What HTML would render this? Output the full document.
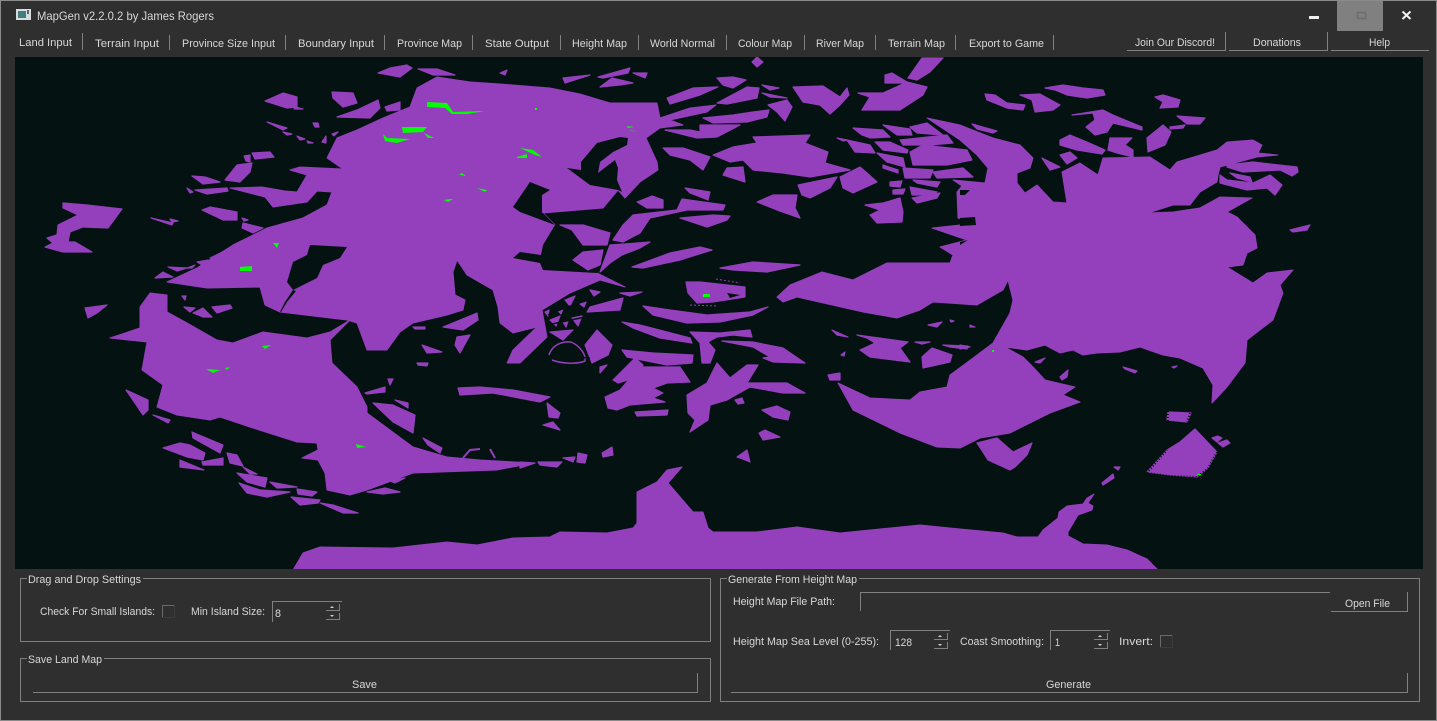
<!DOCTYPE html>
<html><head><meta charset="utf-8"><title>MapGen</title>
<style>
html,body{margin:0;padding:0;background:#2f2f2f;width:1437px;height:721px;overflow:hidden}
svg{display:block}
text{font-family:"Liberation Sans",sans-serif;font-size:11px;fill:#d8d8d8}
</style></head><body>
<svg width="1437" height="721" viewBox="0 0 1437 721" xmlns="http://www.w3.org/2000/svg">
<defs><clipPath id="m"><rect x="15" y="57" width="1408" height="512"/></clipPath></defs>
<rect width="1437" height="721" fill="#2f2f2f"/>
<rect x="0.5" y="0.5" width="1436" height="720" fill="none" stroke="#8a8a8a"/>
<!-- title bar -->
<rect x="16" y="9" width="15" height="11" fill="#d8dcdc"/><rect x="18" y="11" width="8" height="7" fill="#3f7f80"/><rect x="27" y="10" width="2" height="4" fill="#5a6a6a"/>
<text x="37" y="20" textLength="177" lengthAdjust="spacingAndGlyphs" style="font-size:12px">MapGen v2.2.0.2 by James Rogers</text>
<rect x="1309" y="16" width="10" height="3" fill="#eee"/>
<rect x="1337" y="1" width="46" height="30" fill="#808080"/>
<rect x="1357.5" y="12.5" width="8" height="6" fill="none" stroke="#6c6c6c" stroke-width="1.5"/>
<path d="M1402.5 11.5L1410.5 19M1410.5 11.5L1402.5 19" stroke="#f2f2f2" stroke-width="2" fill="none"/>
<!-- menu -->
<g>
<text x="19" y="46" textLength="53" lengthAdjust="spacingAndGlyphs">Land Input</text>
<text x="95" y="47" textLength="64" lengthAdjust="spacingAndGlyphs">Terrain Input</text>
<text x="182" y="47" textLength="93" lengthAdjust="spacingAndGlyphs">Province Size Input</text>
<text x="298" y="47" textLength="76" lengthAdjust="spacingAndGlyphs">Boundary Input</text>
<text x="397" y="47" textLength="65" lengthAdjust="spacingAndGlyphs">Province Map</text>
<text x="485" y="47" textLength="64" lengthAdjust="spacingAndGlyphs">State Output</text>
<text x="572" y="47" textLength="55" lengthAdjust="spacingAndGlyphs">Height Map</text>
<text x="650" y="47" textLength="65" lengthAdjust="spacingAndGlyphs">World Normal</text>
<text x="738" y="47" textLength="54" lengthAdjust="spacingAndGlyphs">Colour Map</text>
<text x="816" y="47" textLength="48" lengthAdjust="spacingAndGlyphs">River Map</text>
<text x="888" y="47" textLength="57" lengthAdjust="spacingAndGlyphs">Terrain Map</text>
<text x="969" y="47" textLength="75" lengthAdjust="spacingAndGlyphs">Export to Game</text>
<text x="1135" y="46" textLength="80" lengthAdjust="spacingAndGlyphs">Join Our Discord!</text>
<text x="1253" y="46" textLength="48" lengthAdjust="spacingAndGlyphs">Donations</text>
<text x="1369" y="46" textLength="21" lengthAdjust="spacingAndGlyphs">Help</text>
</g>
<path d="M82.5 33V50M169.5 35V50M285.5 35V50M384.5 35V50M472.5 35V50M560.5 35V50M638.5 35V50M726.5 35V50M804.5 35V50M875.5 35V50M955.5 35V50M1053.5 35V50M1127 50.5H1225.5V32M1229 50.5H1327.5V32M1331 50.5H1429" fill="none" stroke="#808080"/>
<!-- map -->
<rect x="15" y="57" width="1408" height="512" fill="#041212"/>
<g clip-path="url(#m)">
<g fill="#9440bc" stroke="#9440bc" stroke-width="1" stroke-linejoin="round">
<polygon points="417,88 437,77 470,82 500,84 550,88 580,94 610,103 657,103 660,118 690,108 716,105 707,112 670,120 683,125 660,128 646,138 657,162 658,170 640,182 625,198 618,190 603,208 543,213 555,225 543,245 541,255 540,263 543,270 597,273 625,287 600,280 570,293 542,310 547,337 520,363 507,363 513,350 537,327 513,333 500,323 498,307 493,290 467,275 457,260 453,272 455,295 465,300 463,310 447,315 413,323 400,332 387,350 367,350 357,323 347,320 280,312 265,305 260,287 207,288 167,282 197,268 233,245 267,228 303,218 327,205 332,192 317,191 307,202 273,207 265,197 230,188 262,187 285,191 297,192 307,175 290,170 300,167 343,169 327,158 337,138 357,130 383,118 410,107"/>
<polygon points="110,338 140,328 140,307 150,293 167,295 167,312 187,323 217,340 233,343 263,332 307,338 330,332 350,320 330,340 332,363 357,387 367,407 367,413 413,447 447,457 480,460 533,463 497,470 413,473 367,490 350,495 327,490 325,473 318,460 302,458 318,450 317,443 297,442 253,428 220,417 210,420 177,415 157,407 163,385 142,370 147,342"/>
<polygon points="777,297 790,285 822,272 853,280 887,263 950,263 953,255 940,247 967,240 932,228 960,225 975,222 958,218 957,192 962,186 953,180 985,183 988,168 977,155 960,140 945,130 927,118 960,125 993,138 1020,145 1033,158 1030,168 1017,173 1017,183 1025,193 1037,185 1053,202 1067,203 1062,172 1080,163 1098,175 1103,158 1150,157 1170,170 1177,162 1217,150 1227,142 1253,140 1262,145 1258,153 1278,155 1257,157 1220,167 1218,175 1217,182 1200,192 1190,205 1173,205 1148,213 1173,212 1200,208 1220,197 1252,198 1227,212 1237,217 1255,235 1257,248 1247,253 1243,265 1227,267 1253,283 1267,273 1293,270 1280,285 1283,293 1273,320 1247,340 1245,363 1227,387 1212,403 1213,385 1203,368 1180,358 1163,355 1140,347 1120,352 1097,353 1083,355 1073,350 1060,353 1045,345 1027,350 1005,347 1023,357 1033,367 1045,380 1075,387 1063,395 1080,402 1050,413 1010,433 980,438 960,448 937,447 900,433 853,410 838,383 870,398 910,400 920,392 947,387 950,375 973,358 993,343 1010,313 1013,300 1008,280 1003,290 977,305 933,302 920,310 897,318 863,312 797,297 783,302"/>
<polygon points="293,570 303,553 320,547 393,548 447,542 477,545 513,538 550,537 560,532 607,533 633,528 637,523 637,492 657,482 667,470 682,467 668,483 693,512 703,512 708,528 713,532 757,532 797,527 840,533 920,525 960,529 1003,533 1017,537 1038,537 1043,530 1058,518 1059,512 1067,506 1083,504 1087,498 1094,494 1088,503 1093,506 1092,510 1078,515 1068,532 1068,536 1083,544 1107,545 1127,550 1147,559 1158,570"/>
</g>
<g fill="#041212">
<polygon points="310,245 347,247 340,258 323,265 317,278 293,290 287,282 293,262 307,255"/>
<polygon points="293,290 285,302 280,312 281,312 287,302 296,291"/>
<polygon points="567,168 581,170 581,162 597,143 620,137 628,138 627,145 613,152 600,162 598,173 615,160 618,168 617,180 622,192 618,190 590,185"/>
<polygon points="513,207 530,182 550,190 542,195 542,213 543,213 555,225 520,212"/>
<polygon points="555,225 543,245 541,255 520,252 513,258 540,263 543,270 597,273 610,263 572,262 570,225"/>
<polygon points="960,190 970,190 965,195 960,195"/>
<polygon points="960,218 975,217 976,225 960,226"/>
<polygon points="960,242 968,240 960,245"/>
</g>
<g fill="#9440bc" stroke="#9440bc" stroke-width="1.2" stroke-linejoin="round">
<polygon points="378,73 390,68 407,65 412,68 400,77"/><polygon points="418,69 437,69 455,75 433,75"/>
<polygon points="265,101 283,93 297,97 297,107 287,108"/><polygon points="295,107 303,109 294,109"/>
<polygon points="332,92 353,93 357,103 343,107 333,98"/><polygon points="337,117 357,110 378,100 380,108 370,118"/>
<polygon points="385,107 400,102 400,110 387,111"/><polygon points="313,123 318,123 319,127 315,127"/>
<polygon points="267,122 287,128 283,130"/><polygon points="283,132 292,134 287,135"/><polygon points="297,136 305,139 300,140"/><polygon points="307,141 313,143 308,143"/><polygon points="322,142 326,136 326,143"/><polygon points="332,134 338,132 334,136"/>
<polygon points="252,153 270,152 274,157 255,159"/><polygon points="225,180 237,165 252,163 250,172 240,182"/><polygon points="244,156 250,155 250,162 246,161"/>
<polygon points="192,176 205,177 220,182 203,184"/><polygon points="187,188 193,192 190,193"/><polygon points="195,190 227,188 228,191 207,194"/>
<polygon points="202,210 210,207 237,212 237,220 223,220"/><polygon points="243,223 263,228 253,233 242,228"/><polygon points="242,218 248,220 244,221"/>
<polygon points="63,203 87,205 122,209 108,228 83,227 70,232 68,242 75,242 92,252 63,252 45,247 53,243 47,238 57,235 58,225 78,215 63,208"/>
<polygon points="151,218 173,223 172,225"/><polygon points="170,219 178,221 172,222"/>
<polygon points="155,278 163,272 173,277"/><polygon points="168,267 187,268 177,271"/><polygon points="187,268 195,265 192,268"/><polygon points="197,262 208,260 202,265"/><polygon points="210,258 233,247 223,257"/>
<polygon points="85,308 107,305 97,313 88,318"/><polygon points="184,307 195,308 190,312"/><polygon points="182,296 186,296 185,300"/><polygon points="193,313 203,308 212,317 203,317"/><polygon points="212,307 230,305 232,308 217,313"/>
<polygon points="126,390 148,400 148,410 143,415 135,403"/><polygon points="153,415 170,420 168,423"/>
<polygon points="192,432 223,445 220,453 193,438"/><polygon points="163,448 180,443 190,445 205,453 203,460 187,457"/><polygon points="180,460 204,470 180,467"/><polygon points="202,462 223,458 223,465 203,465"/>
<polygon points="227,453 237,455 243,466 230,463"/><polygon points="243,467 257,474 250,474"/><polygon points="237,473 267,478 265,487 247,482"/><polygon points="270,482 297,487 277,488"/><polygon points="239,483 260,490 290,492 267,497 247,493"/><polygon points="297,489 317,492 312,496 298,494"/><polygon points="291,497 320,500 318,503 300,505"/><polygon points="320,503 333,505 358,513 343,513"/><polygon points="367,492 385,488 400,492 383,494"/><polygon points="390,481 405,478 395,483"/>
<polygon points="365,393 385,387 385,392 367,394"/><polygon points="388,379 393,379 390,385"/><polygon points="373,403 393,405 415,415 413,433 393,422"/><polygon points="395,400 408,403 408,408"/><polygon points="423,438 442,448 440,453 428,445"/>
<polygon points="422,345 442,352 427,353"/><polygon points="417,363 428,363 427,366 418,365"/><polygon points="413,327 425,327 425,329 415,329"/><polygon points="443,327 477,313 478,320 463,330"/><polygon points="457,337 470,335 460,353 455,345"/>
<polygon points="458,388 480,387 513,390 550,397 540,402 493,393 460,395"/>
<polygon points="547,403 560,413 558,418 549,417"/><polygon points="543,425 553,422 560,430"/>
<polygon points="520,462 535,463 520,468"/><polygon points="538,462 562,462 557,467 540,465"/><polygon points="563,458 575,457 573,462"/><polygon points="578,453 587,455 585,463 577,462"/><polygon points="602,453 612,447 613,455 603,457"/>
<polygon points="563,78 590,75 565,83"/><polygon points="598,77 630,68 628,73 603,78"/><polygon points="612,78 633,83 620,85 600,87"/><polygon points="633,73 647,73 645,78"/><polygon points="500,73 507,70 505,75"/>
<polygon points="908,78 922,58 943,58 930,72 917,80"/>
<polygon points="885,75 892,73 907,82 927,87 923,95 900,110 880,110 862,110 870,97 858,93 883,93 905,83 885,83"/>
<polygon points="793,87 823,86 840,97 847,88 849,95 840,105 830,114 820,105 803,102"/>
<polygon points="752,62 757,57 763,62 757,67"/><polygon points="717,78 733,77 746,80 733,88 723,85"/>
<polygon points="667,98 693,88 718,87 700,95 670,104"/><polygon points="717,103 747,87 759,88 757,98 727,104"/>
<polygon points="762,85 779,88 770,90"/><polygon points="762,93 787,98 770,97"/><polygon points="768,105 787,100 792,107 785,121 777,112"/>
<polygon points="703,118 733,115 753,112 769,110 767,117 747,122 713,123"/>
<polygon points="700,125 740,125 717,137 697,138 665,130 690,130 700,132"/>
<polygon points="663,148 683,148 710,157 703,170 690,160 670,155"/>
<polygon points="713,155 733,147 757,143 753,137 810,135 805,143 828,152 825,163 850,170 810,177 783,173 753,170 743,160 730,162"/>
<polygon points="727,168 743,167 745,182 723,175"/><polygon points="798,185 837,177 830,188 810,198 802,195"/><polygon points="840,177 860,167 867,173 877,182 853,193 843,188"/>
<polygon points="757,202 773,195 797,195 795,208 800,218 777,210"/><polygon points="865,205 883,203 900,198 903,212 902,222 877,223 870,215 880,210"/>
<polygon points="685,188 710,192 708,200 690,193"/><polygon points="637,202 652,196 663,200 663,208 647,208"/>
<polygon points="613,240 623,225 633,215 677,210 682,199 703,202 725,205 723,210 687,210 650,218 640,233 623,242"/>
<polygon points="680,218 713,215 730,216 727,220 707,227"/><polygon points="560,225 583,225 610,233 607,245 583,245 572,230"/>
<polygon points="573,260 583,252 603,250 600,265 588,270"/><polygon points="600,272 610,245 650,242 640,248 622,255 610,263"/>
<polygon points="632,267 670,253 700,247 712,250 680,260 643,268"/><polygon points="720,268 753,262 800,265 767,272 733,270"/>
<polygon points="686,282 700,282 745,287 745,297 713,302 697,303 688,293"/>
<polygon points="853,128 883,130 890,137 870,138 862,135"/><polygon points="883,125 910,129 912,135 897,135"/><polygon points="910,127 927,123 943,135 917,133"/><polygon points="900,140 947,135 953,143 930,145 903,145"/><polygon points="837,138 847,140 843,141"/><polygon points="847,140 870,145 875,153 855,152"/><polygon points="875,142 890,142 908,150 907,153 883,150"/><polygon points="877,153 903,158 905,167 887,162"/><polygon points="910,152 923,145 967,150 972,160 947,165 913,165"/><polygon points="883,165 898,170 898,173 883,168"/><polygon points="903,168 933,170 930,178 905,178"/><polygon points="933,172 963,168 973,177 937,178"/><polygon points="913,180 940,182 937,187 917,183"/><polygon points="910,187 937,192 932,195 912,195"/><polygon points="912,198 940,193 937,198 917,203"/><polygon points="890,182 902,181 900,187 890,186"/><polygon points="893,190 905,189 903,194 893,194"/>
<polygon points="1045,88 1063,85 1083,88 1103,90 1105,95 1087,98 1067,95 1055,90"/><polygon points="985,94 995,95 1007,103 1025,105 1023,110 1007,108 987,100"/><polygon points="1020,95 1040,94 1060,105 1053,110 1035,112 1032,100"/><polygon points="1155,97 1163,95 1180,100 1178,107 1160,108 1163,102"/><polygon points="1177,116 1205,118 1200,124 1187,124"/><polygon points="1170,127 1185,125 1183,128 1170,129"/><polygon points="1072,115 1103,110 1113,115 1142,127 1142,130 1113,123 1107,132 1095,135 1086,127 1095,120 1093,113"/><polygon points="1060,140 1070,135 1087,142 1105,150 1102,154 1077,150 1060,145"/><polygon points="1110,138 1132,138 1125,145 1133,150 1133,157 1117,153 1108,150"/><polygon points="1163,125 1171,132 1165,145 1148,152 1147,138"/><polygon points="972,124 997,131 993,133 977,129"/><polygon points="1060,155 1070,152 1077,158 1067,164"/><polygon points="1042,158 1060,167 1050,170"/><polygon points="1290,230 1310,225 1307,230 1293,232"/>
<polygon points="1227,165 1253,162 1297,167 1298,172 1292,176 1280,170 1243,172 1227,167"/><polygon points="1230,173 1250,177 1252,182 1237,178"/><polygon points="1220,175 1227,180 1253,183 1270,175 1282,185 1275,195 1267,188 1247,190 1220,183"/>
<polygon points="643,306 670,310 707,315 750,312 768,307 753,315 720,322 687,323 653,315"/><polygon points="622,322 640,325 667,332 690,338 692,343 660,338 633,328"/><polygon points="690,332 720,333 750,330 752,337 733,335 717,337 708,342 715,350 710,363 702,363 700,343"/><polygon points="722,341 753,342 783,348 805,363 773,362 763,358 770,357 753,347"/><polygon points="622,350 653,353 693,355 692,363 667,365 627,357"/><polygon points="613,380 635,358 643,365 637,377 618,383"/><polygon points="605,397 620,390 640,367 680,367 690,382 667,383 653,388 663,393 653,398 665,402 630,405 617,410 608,408"/><polygon points="635,412 668,410 667,415 637,416"/><polygon points="687,395 707,383 717,363 730,378 747,365 758,365 747,383 787,383 805,393 783,393 750,387 727,400 710,405 708,420 690,432 695,420 688,413"/><polygon points="735,400 742,398 744,403 738,404"/><polygon points="762,410 777,406 790,412 788,420 773,417"/><polygon points="759,433 765,430 780,437 763,440"/><polygon points="737,457 747,450 750,462 740,458"/>
<polygon points="832,330 848,337 837,335"/><polygon points="857,335 908,342 900,348 910,362 870,357 860,350 875,343 867,338"/><polygon points="922,357 932,348 952,355 950,362 923,368"/><polygon points="943,345 968,346 967,349 950,347"/><polygon points="915,342 930,342 922,344"/><polygon points="828,375 840,373 840,380 830,380"/><polygon points="841,355 845,352 844,356"/>
<polygon points="977,443 997,438 1013,452 1032,443 1027,455 1015,467 1010,470 988,460 983,452"/><polygon points="1060,377 1068,370 1067,377 1062,380"/><polygon points="1035,362 1045,358 1040,363"/>
<polygon points="1168,412 1191,413 1187,422 1167,420"/><polygon points="1147,472 1167,450 1180,442 1195,429 1217,452 1208,468 1197,477 1170,475"/><polygon points="1212,438 1218,436 1222,438 1217,442"/><polygon points="1218,443 1227,440 1230,443 1223,447"/><polygon points="1102,483 1113,474 1114,478 1103,485"/><polygon points="1114,467 1120,467 1118,470"/><polygon points="1123,367 1137,371 1135,373 1125,369"/><polygon points="1172,367 1177,366 1174,368"/>
<polygon points="970,325 975,327 970,327"/><polygon points="960,345 970,347 960,349"/><polygon points="928,325 942,322 937,327"/><polygon points="950,320 954,321 951,322"/>
<polygon points="590,307 623,298 620,310 587,312"/><polygon points="597,330 612,345 608,355 592,363 585,345"/><polygon points="600,367 607,365 600,373"/><polygon points="550,332 573,330 563,340"/><polygon points="620,293 642,292 630,296"/><polygon points="565,300 575,296 570,306"/><polygon points="590,290 600,292 594,296"/><polygon points="550,320 560,316 556,326"/><polygon points="572,318 582,316 578,326"/>
<polygon points="558,311 563,309 561,314"/><polygon points="580,304 586,302 584,307"/><polygon points="545,312 549,310 548,316"/><polygon points="563,322 568,321 566,327"/>
</g>
<path d="M549 355C552 345 562 341 571 342C582 347 586 356 585 361C575 365 560 363 552 360" fill="none" stroke="#9440bc" stroke-width="1.5"/>
<path d="M463 458L470 450L480 449M490 449L495 458" fill="none" stroke="#9440bc" stroke-width="2"/>
<path d="M548 315C570 305 590 300 600 296M552 324L590 316M575 357L590 358" fill="none" stroke="#041212" stroke-width="1.5"/>
<polygon points="727,293 740,295 730,298" fill="#041212"/>
<path d="M716 279L740 283M690 305L716 306" stroke="#9440bc" stroke-dasharray="2 2" fill="none"/>
<path d="M1147 473L1167 450M1217 452L1208 468L1197 477L1170 476L1147 473M1168 411V421M1190 413L1187 422" stroke="#041212" stroke-dasharray="1 2" fill="none" stroke-width="2"/>
<g fill="#00ff00">
<polygon points="427,102 447,103 453,112 485,111 467,114 452,114 445,108 427,107"/><polygon points="402,127 427,127 423,132 403,133"/><polygon points="424,133 434,138 428,138"/><polygon points="383,134 387,138 410,139 397,143 385,141"/><polygon points="459,175 466,176 462,173"/><polygon points="477,188 487,190 485,192"/><polygon points="444,200 450,199 453,199 448,202"/><polygon points="273,243 279,243 277,248"/><polygon points="240,267 252,266 252,271 240,271"/><polygon points="520,148 533,150 542,157 535,155"/><polygon points="517,157 527,154 527,158 517,158"/><polygon points="627,126 634,127 628,128"/><polygon points="630,130 638,132 632,131"/><rect x="535" y="108" width="2" height="2"/><polygon points="206,369 220,370 213,373"/><polygon points="225,368 230,367 227,370"/><polygon points="262,346 271,345 265,349"/><polygon points="356,444 366,447 357,448"/><rect x="703" y="294" width="7" height="3"/><rect x="992" y="350" width="2" height="2"/><rect x="1197" y="474" width="4" height="1"/>
</g>
</g>
<!-- bottom groups -->
<path d="M27 578.5H20.5V641.5H710.5V578.5H143M27 658.5H20.5V701.5H710.5V658.5H104M727 578.5H720.5V701.5H1419.5V578.5H859" fill="none" stroke="#808080"/>
<text x="28" y="583" textLength="113" lengthAdjust="spacingAndGlyphs">Drag and Drop Settings</text>
<text x="28" y="663" textLength="74" lengthAdjust="spacingAndGlyphs">Save Land Map</text>
<text x="728" y="583" textLength="129" lengthAdjust="spacingAndGlyphs">Generate From Height Map</text>
<text x="40" y="615" textLength="115" lengthAdjust="spacingAndGlyphs">Check For Small Islands:</text>
<text x="191" y="615" textLength="74" lengthAdjust="spacingAndGlyphs">Min Island Size:</text>
<text x="275" y="617" textLength="6" lengthAdjust="spacingAndGlyphs">8</text>
<text x="352" y="688" textLength="25" lengthAdjust="spacingAndGlyphs">Save</text>
<text x="733" y="605" textLength="102" lengthAdjust="spacingAndGlyphs">Height Map File Path:</text>
<text x="1345" y="607" textLength="45" lengthAdjust="spacingAndGlyphs">Open File</text>
<text x="733" y="645" textLength="146" lengthAdjust="spacingAndGlyphs">Height Map Sea Level (0-255):</text>
<text x="895" y="646" textLength="17" lengthAdjust="spacingAndGlyphs">128</text>
<text x="960" y="645" textLength="84" lengthAdjust="spacingAndGlyphs">Coast Smoothing:</text>
<text x="1055" y="646" textLength="5" lengthAdjust="spacingAndGlyphs">1</text>
<text x="1119" y="645" textLength="34" lengthAdjust="spacingAndGlyphs">Invert:</text>
<text x="1046" y="688" textLength="45" lengthAdjust="spacingAndGlyphs">Generate</text>
<!-- controls -->
<path d="M33 692.5H697.5V673M731 692.5H1407.5V673M860.5 611V592.5H1330M1331 611.5H1407.5V592M272.5 622V601.5H342M326 610.5H339.5V604M326 619.5H339.5V613M890.5 650V630.5H950M934 639.5H947.5V633M934 648.5H947.5V642M1050.5 650V630.5H1110M1094 639.5H1107.5V633M1094 648.5H1107.5V642" fill="none" stroke="#808080"/>
<path d="M162.5 617V605.5H174M1160.5 647V635.5H1172" fill="none" stroke="#6a6a6a"/>
<path d="M174.5 605V617.5H162M1172.5 635V647.5H1160" fill="none" stroke="#3c3c3c"/>
<g fill="#cfcfcf"><path d="M330 608H334L332 606ZM330 615H334L332 617ZM938 637H942L940 635ZM938 644H942L940 646ZM1098 637H1102L1100 635ZM1098 644H1102L1100 646Z"/></g>
</svg>
</body></html>
